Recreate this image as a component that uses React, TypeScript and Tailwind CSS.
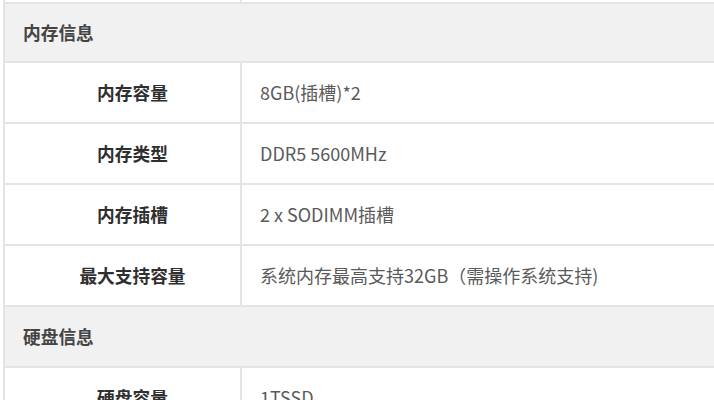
import React from "react";

type Row = { label: string; value: string };
type Group = { title: string; rows: Row[] };

const groups: Group[] = [
  {
    title: "内存信息",
    rows: [
      { label: "内存容量", value: "8GB(插槽)*2" },
      { label: "内存类型", value: "DDR5 5600MHz" },
      { label: "内存插槽", value: "2 x SODIMM插槽" },
      { label: "最大支持容量", value: "系统内存最高支持32GB（需操作系统支持)" },
    ],
  },
  {
    title: "硬盘信息",
    rows: [{ label: "硬盘容量", value: "1TSSD" }],
  },
];

function SpecRow({ row }: { row: Row }) {
  return (
    <div className="flex h-[61px] border-b-2 border-[#e4e4e4] bg-white">
      <div className="flex w-[237px] shrink-0 items-center justify-center border-r-2 border-[#e4e4e4] pl-[20px] text-[17.7px] font-bold text-[#2f2f2f]">
        {row.label}
      </div>
      <div className="flex flex-1 items-center pl-[18px] text-[18px] text-[#5a5a5a]">
        {row.value}
      </div>
    </div>
  );
}

export default function App() {
  return (
    <div
      className="h-[400px] w-[714px] overflow-hidden bg-white"
      style={{ fontFamily: '"Microsoft YaHei", "Noto Sans CJK SC", "Noto Sans", sans-serif' }}
    >
      <div className="ml-[3px] w-[740px] border-l-2 border-[#e4e4e4]">
        {/* tail of the previous row */}
        <div className="flex h-[4px] border-b-2 border-[#e4e4e4]">
          <div className="w-[237px] border-r-2 border-[#e4e4e4]" />
        </div>
        {groups.map((g, i) => (
          <div key={g.title}>
            <div
              className={
                i === 0
                  ? "flex h-[59px] items-center border-b-2 border-[#e4e4e4] bg-[#f1f1f1] pl-[18px] text-[17.7px] font-semibold text-[#444]"
                  : "flex h-[61px] items-center border-b-2 border-[#e4e4e4] bg-[#f1f1f1] pl-[18px] text-[17.7px] font-semibold text-[#444]"
              }
            >
              {g.title}
            </div>
            {g.rows.map((r) => (
              <SpecRow key={r.label} row={r} />
            ))}
          </div>
        ))}
      </div>
    </div>
  );
}
